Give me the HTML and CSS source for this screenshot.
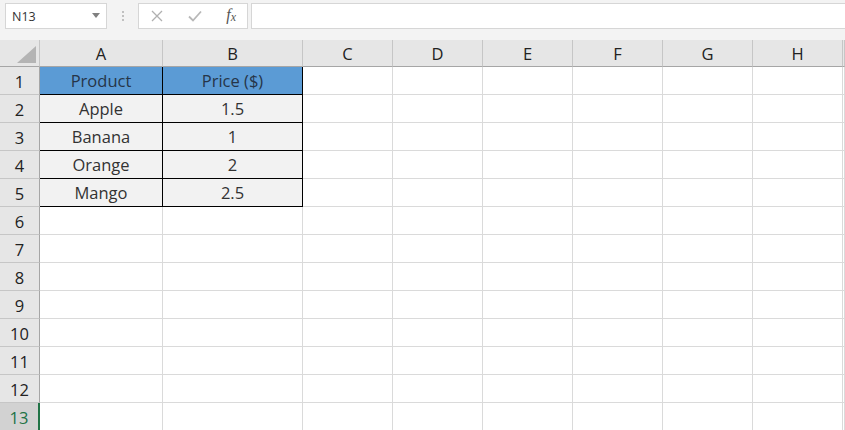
FILE: index.html
```html
<!DOCTYPE html>
<html lang="en">
<head>
  <meta charset="UTF-8">
  <title>Sheet1</title>
  <link rel="stylesheet" href="styles.css">
</head>
<body>
  <!-- Formula bar -->
  <div class="formula-bar">
    <div class="name-box">
      <span>N13</span>
      <span class="caret"></span>
    </div>
    <div class="grip"><i></i><i></i><i></i></div>
    <div class="fx-buttons">
      <svg width="14" height="14" viewBox="0 0 14 14"><path d="M2 2L12 12M12 2L2 12" stroke="#b0b0b0" stroke-width="1.3" fill="none"/></svg>
      <svg width="16" height="14" viewBox="0 0 16 14"><path d="M2 7.5L6 11.5L14 2.5" stroke="#b8b8b8" stroke-width="1.8" fill="none"/></svg>
      <span class="fx">f<sub>x</sub></span>
    </div>
    <div class="formula-input"></div>
  </div>

  <!-- Grid -->
  <div class="sheet">
    <div class="row head">
      <div class="corner"><span class="select-all"></span></div>
      <div>A</div><div>B</div><div>C</div><div>D</div><div>E</div><div>F</div><div>G</div><div>H</div><div></div>
    </div>
    <div class="row">
      <div class="num">1</div>
      <div class="cell title">Product</div><div class="cell title">Price ($)</div>
      <div></div><div></div><div></div><div></div><div></div><div></div><div></div>
    </div>
    <div class="row">
      <div class="num">2</div>
      <div class="cell">Apple</div><div class="cell">1.5</div>
      <div></div><div></div><div></div><div></div><div></div><div></div><div></div>
    </div>
    <div class="row">
      <div class="num">3</div>
      <div class="cell">Banana</div><div class="cell">1</div>
      <div></div><div></div><div></div><div></div><div></div><div></div><div></div>
    </div>
    <div class="row">
      <div class="num">4</div>
      <div class="cell">Orange</div><div class="cell">2</div>
      <div></div><div></div><div></div><div></div><div></div><div></div><div></div>
    </div>
    <div class="row">
      <div class="num">5</div>
      <div class="cell">Mango</div><div class="cell">2.5</div>
      <div></div><div></div><div></div><div></div><div></div><div></div><div></div>
    </div>
    <div class="row"><div class="num">6</div><div></div><div></div><div></div><div></div><div></div><div></div><div></div><div></div><div></div></div>
    <div class="row"><div class="num">7</div><div></div><div></div><div></div><div></div><div></div><div></div><div></div><div></div><div></div></div>
    <div class="row"><div class="num">8</div><div></div><div></div><div></div><div></div><div></div><div></div><div></div><div></div><div></div></div>
    <div class="row"><div class="num">9</div><div></div><div></div><div></div><div></div><div></div><div></div><div></div><div></div><div></div></div>
    <div class="row"><div class="num">10</div><div></div><div></div><div></div><div></div><div></div><div></div><div></div><div></div><div></div></div>
    <div class="row"><div class="num">11</div><div></div><div></div><div></div><div></div><div></div><div></div><div></div><div></div><div></div></div>
    <div class="row"><div class="num">12</div><div></div><div></div><div></div><div></div><div></div><div></div><div></div><div></div><div></div></div>
    <div class="row"><div class="num active">13</div><div></div><div></div><div></div><div></div><div></div><div></div><div></div><div></div><div></div></div>
  </div>
</body>
</html>
```

FILE: styles.css
```css
* {
  margin: 0;
  padding: 0;
  box-sizing: border-box;
}

body {
  background: #ffffff;
  font-family: 'Open Sans', 'Noto Sans', sans-serif;
  color: #222;
  overflow: hidden;
}

/* Formula bar */
.formula-bar {
  display: flex;
  align-items: flex-start;
  height: 40px;
  padding: 3px 0 0 5px;
  background: #f3f3f3;
}

.name-box {
  width: 102px;
  height: 26px;
  background: #fff;
  border: 1px solid #d6d6d6;
  display: flex;
  align-items: center;
  justify-content: space-between;
  padding: 0 6px 0 6px;
  font-size: 12.5px;
  color: #333;
}

.caret {
  width: 0;
  height: 0;
  border-left: 4.5px solid transparent;
  border-right: 4.5px solid transparent;
  border-top: 5px solid #808080;
  margin-top: -1px;
}

.grip {
  width: 31px;
  height: 26px;
  display: flex;
  flex-direction: column;
  align-items: center;
  justify-content: center;
  gap: 2px;
}

.grip i {
  width: 2px;
  height: 2px;
  background: #c0c0c0;
}

.fx-buttons {
  width: 110px;
  height: 26px;
  background: #fff;
  border: 1px solid #d6d6d6;
  display: flex;
  align-items: center;
  justify-content: space-between;
  padding: 0 11px 0 11px;
}

.fx {
  font-family: 'Liberation Serif', serif;
  font-style: italic;
  font-size: 16px;
  color: #555;
  margin-top: -2px;
}

.fx sub {
  font-size: 12px;
  vertical-align: -1px;
}

.formula-input {
  flex: 1;
  height: 26px;
  margin-left: 3px;
  background: #fff;
  border: 1px solid #d6d6d6;
  border-right: none;
}

/* Sheet grid */
.row {
  display: grid;
  grid-template-columns: 40px 123px 140px repeat(6, 90px) 1fr;
  height: 28px;
}

.row > div {
  border-right: 1px solid #dadada;
  border-bottom: 1px solid #dadada;
  display: flex;
  align-items: center;
  justify-content: center;
  font-size: 16.5px;
  color: #333;
}

.row.head {
  height: 27px;
  background: #e6e6e6;
}

.row.head > div {
  border-right-color: #c6c6c6;
  border-bottom-color: #a6a6a6;
  color: #222;
  padding-top: 1px;
}

.corner {
  position: relative;
}

.select-all {
  position: absolute;
  right: 3px;
  bottom: 3px;
  width: 0;
  height: 0;
  border-left: 19px solid transparent;
  border-bottom: 17px solid #b4b4b4;
}

.row > .num {
  background: #e6e6e6;
  border-right-color: #a6a6a6;
  border-bottom-color: #c6c6c6;
  color: #222;
  padding-top: 1px;
}

.row > .num.active {
  background: #d2d2d2;
  color: #217346;
  border-right: 2px solid #217346;
}

.row > .cell {
  background: #f2f2f2;
  border-right-color: #000;
  border-bottom-color: #000;
}

.row > .cell.title {
  background: #5b9bd5;
  color: #263548;
}
```
